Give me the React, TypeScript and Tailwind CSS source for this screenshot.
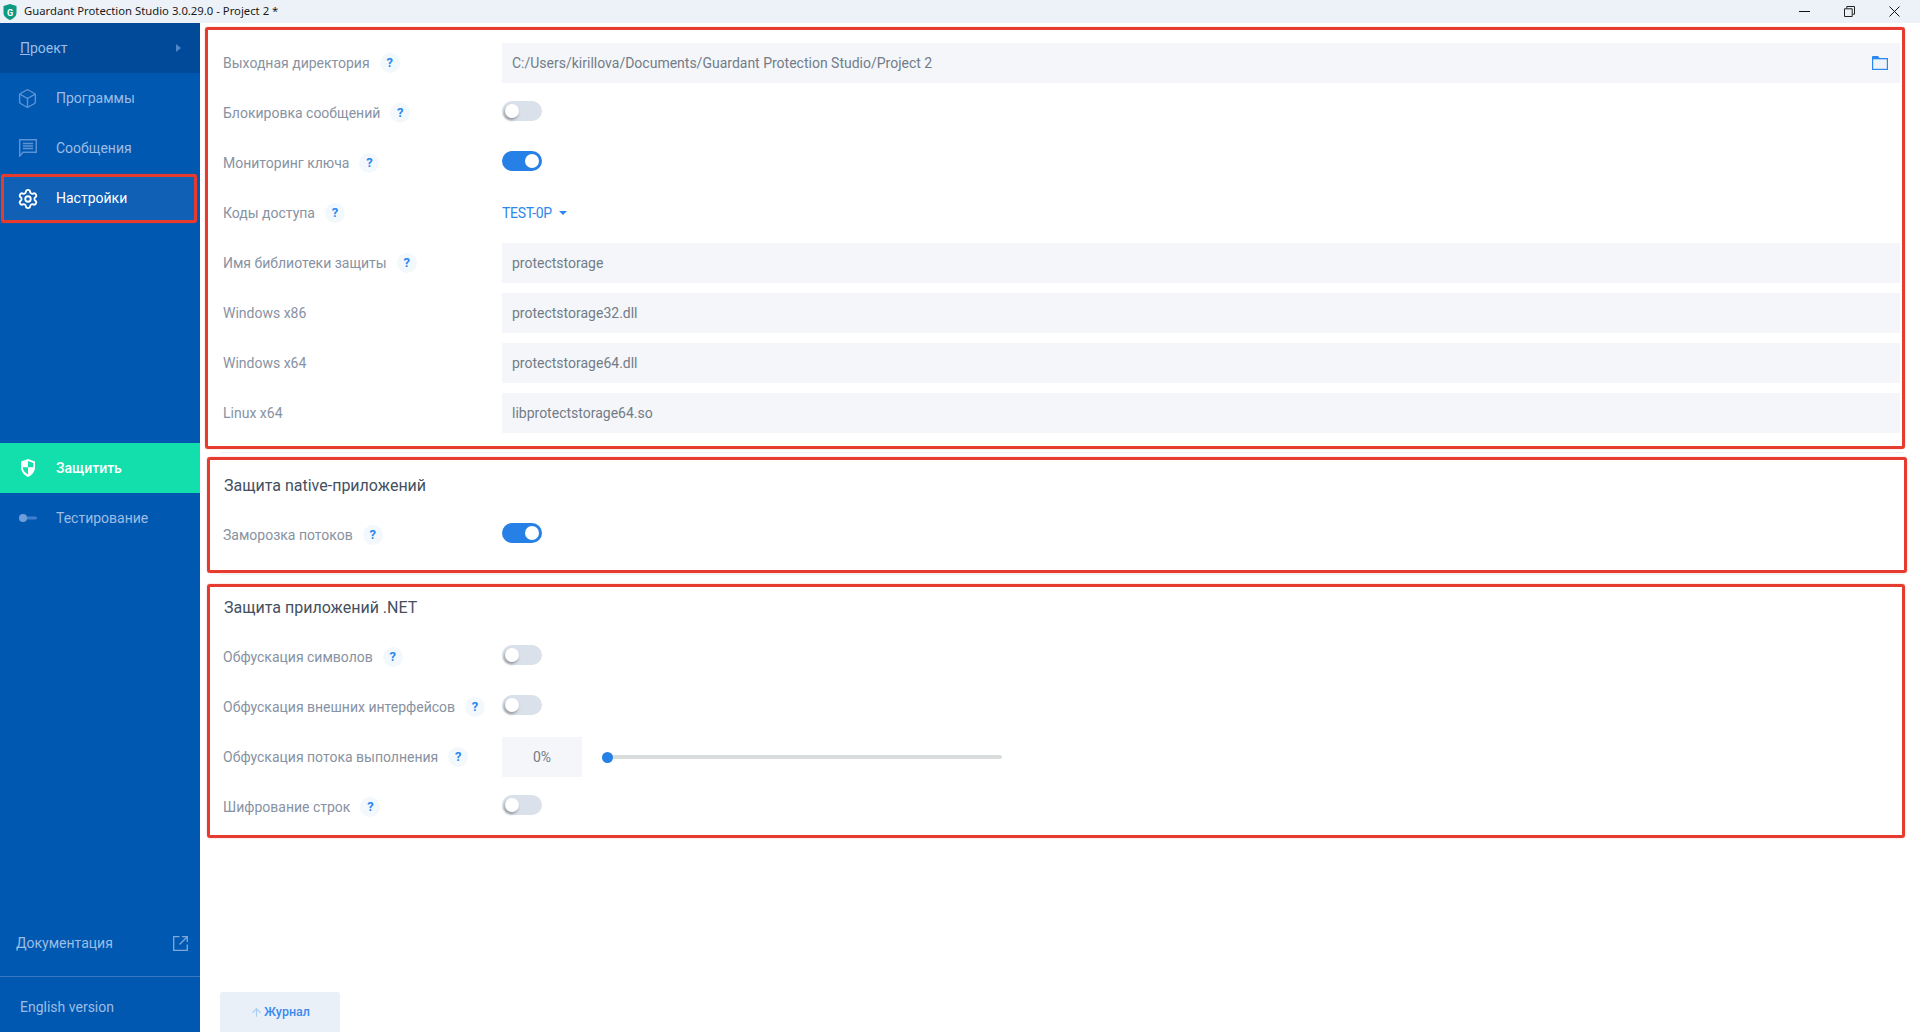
import { ReactNode } from "react";
import { ArrowUp, Box, Settings } from "lucide-react";

type RowProps = {
  label: string;
  children?: ReactNode;
};

const Help = () => (
  <span className="ml-[10px] flex h-5 w-5 shrink-0 items-center justify-center rounded-full bg-[#f3f8fd] text-[13px] font-bold text-[#2b88ee]">
    ?
  </span>
);

const Row = ({ label, children }: RowProps) => (
  <div className="flex h-[50px] items-center">
    <div className="flex w-[279px] shrink-0 items-center text-[14px] text-[#8792a2]">
      <span>{label}</span>
      {label.startsWith("Windows") || label.startsWith("Linux") ? null : <Help />}
    </div>
    {children}
  </div>
);

const Toggle = ({ on }: { on?: boolean }) => (
  <div
    className={`mb-1 flex h-5 w-10 items-center rounded-full px-[3px] ${
      on ? "justify-end bg-[#2680e6]" : "justify-start bg-[#dbe1ea]"
    }`}
  >
    <div
      className={`h-[14px] w-[14px] rounded-full bg-white ${
        on ? "" : "shadow-[-1px_2px_3px_rgba(60,60,60,0.45)]"
      }`}
    />
  </div>
);

const Field = ({ value, icon }: { value: string; icon?: ReactNode }) => (
  <div className="flex h-10 flex-1 items-center justify-between bg-[#f4f6f9] pl-[10px] pr-[12px] text-[14px] text-[#727c88]">
    <span>{value}</span>
    {icon}
  </div>
);

const FolderIcon = () => (
  <svg width="16" height="14" viewBox="0 0 16 14" fill="none">
    <path d="M0 1.2C0 .5.5 0 1.2 0H6l1.6 2H16v12H0V1.2Z" fill="#2b88ee" />
    <rect x="1.2" y="3.3" width="13.6" height="9.5" fill="#eef3f8" />
  </svg>
);

const MessageIcon = () => (
  <svg width="18" height="18" viewBox="0 0 18 18" fill="none" stroke="currentColor">
    <path d="M.7.7h16.6v12.6H4L.7 17V.7Z" strokeWidth="1.4" />
    <path d="M4 4.5h10M4 7h10M4 9.5h10" strokeWidth="1.3" />
  </svg>
);

const ShieldIcon = () => (
  <svg width="16" height="18" viewBox="0 0 16 18" fill="none">
    <path d="M8 0 15 2.6v5.6c0 4.4-3 7.8-7 9.8-4-2-7-5.400-7-9.800V2.600L8 0Z" fill="white" />
    <path d="M8 2 13.300 4v4.200H8V2ZM8 8.200H2.700c.2 3 2.400 5.600 5.300 7.300V8.200Z" fill="#12dfab" />
  </svg>
);

const SwitchIcon = () => (
  <svg width="18" height="8" viewBox="0 0 18 8">
    <rect x="3" y="2.500" width="15" height="3" rx="1.500" fill="#3f7fcb" />
    <circle cx="4" cy="4" r="4" fill="#6f9fdb" />
  </svg>
);

const LinkIcon = () => (
  <svg width="15" height="15" viewBox="0 0 15 15" fill="none" stroke="#7fa8da" strokeWidth="1.3">
    <path d="M6.500.7H.7v13.600h13.600V8.500" />
    <path d="M9 .7h5.300V6M14.300.7 6.500 8.500" />
  </svg>
);

const AppIcon = () => (
  <svg width="14" height="16" viewBox="0 0 14 16">
    <path d="M7 0 13.500 2v7c0 3-3 5.500-6.500 7C3.500 14.500.5 12 .5 9V2L7 0Z" fill="#0e9a82" />
    <text x="7" y="11.500" textAnchor="middle" fontSize="9" fontWeight="700" fill="white" fontFamily="Roboto, sans-serif">
      G
    </text>
  </svg>
);

const NavItem = ({ icon, label }: { icon: ReactNode; label: string }) => (
  <div className="flex h-[50px] items-center text-[14px] text-[#9dbde6]">
    <span className="flex w-[56px] shrink-0 pl-[19px] text-[#5c93d6]">{icon}</span>
    {label}
  </div>
);

export default function App() {
  return (
    <div className="flex h-[1032px] w-full flex-col overflow-hidden bg-white font-['Roboto',sans-serif]">
      <div className="flex h-[23px] shrink-0 items-center justify-between bg-[#edf2f8] pl-[3px] pr-[20px]">
        <div className="flex items-center gap-[7px] font-['Noto_Sans',sans-serif] text-[11.300px] text-[#1a1a1a]">
          <AppIcon />
          Guardant Protection Studio 3.0.29.0 - Project 2 *
        </div>
        <div className="flex items-center gap-[34px]">
          <svg width="11" height="11" viewBox="0 0 11 11" stroke="#111" fill="none">
            <path d="M0 5.500h11" />
          </svg>
          <svg width="11" height="11" viewBox="0 0 11 11" stroke="#222" fill="none">
            <path d="M.5 2.800h7.700v7.700H.500zM2.800 2.500V.5h7.700v7.700H8.500" />
          </svg>
          <svg width="11" height="11" viewBox="0 0 11 11" stroke="#111" fill="none">
            <path d="M.5.5l10 10M10.500.5l-10 10" />
          </svg>
        </div>
      </div>

      <div className="flex min-h-0 flex-1">
        <aside className="flex w-[200px] shrink-0 flex-col bg-[#0058b0]">
          <div className="flex h-[50px] items-center justify-between bg-[#004a99] pl-5 pr-[19px] text-[14px] text-[#9dbde6]">
            <span>
              <span className="underline">П</span>роект
            </span>
            <span className="h-0 w-0 border-y-[4px] border-l-[5px] border-y-transparent border-l-[#4f87cb]" />
          </div>
          <NavItem
            icon={
              <span className="-m-[2px]">
                <Box size={21} strokeWidth={1.6} />
              </span>
            }
            label="Программы"
          />
          <NavItem icon={<MessageIcon />} label="Сообщения" />
          <div className="ml-px mr-[3px] mt-px flex h-[49px] items-center rounded-[3px] border-[3px] border-[#e63c30] bg-[#1060b6] text-[14px] text-white shadow-[0_0_1px_#e63c30]">
            <span className="flex w-[52px] shrink-0 pl-[13px]">
              <Settings size={22} strokeWidth={2} />
            </span>
            Настройки
          </div>
          <div className="h-[220px] shrink-0" />
          <div className="flex h-[50px] items-center bg-[#12dfab] text-[14px] font-medium text-white">
            <span className="flex w-[56px] shrink-0 pl-5">
              <ShieldIcon />
            </span>
            Защитить
          </div>
          <NavItem icon={<SwitchIcon />} label="Тестирование" />
          <div className="mt-auto flex h-[67px] items-center justify-between border-b border-[#3a78c4] pl-4 pr-3 text-[14px] text-[#9dbde6]">
            Документация
            <LinkIcon />
          </div>
          <div className="flex h-[55px] items-center pl-5 pt-[5px] text-[14px] text-[#9dbde6]">English version</div>
        </aside>

        <main className="flex min-w-0 flex-1 flex-col">
          <section className="ml-[5px] mr-[15px] mt-1 h-[422px] rounded-[3px] border-[3px] border-[#e63c30] pl-[15px] pr-[2px] pt-2 shadow-[0_0_1px_#e63c30]">
            <Row label="Выходная директория">
              <Field value="C:/Users/kirillova/Documents/Guardant Protection Studio/Project 2" icon={<FolderIcon />} />
            </Row>
            <Row label="Блокировка сообщений">
              <Toggle />
            </Row>
            <Row label="Мониторинг ключа">
              <Toggle on />
            </Row>
            <Row label="Коды доступа">
              <div className="flex items-center gap-[7px] text-[14px] tracking-[-0.3px] text-[#2b88ee]">
                TEST-0P
                <span className="h-0 w-0 border-x-[4px] border-t-[4px] border-x-transparent border-t-[#2b88ee]" />
              </div>
            </Row>
            <Row label="Имя библиотеки защиты">
              <Field value="protectstorage" />
            </Row>
            <Row label="Windows x86">
              <Field value="protectstorage32.dll" />
            </Row>
            <Row label="Windows x64">
              <Field value="protectstorage64.dll" />
            </Row>
            <Row label="Linux x64">
              <Field value="libprotectstorage64.so" />
            </Row>
          </section>

          <div className="ml-5 mr-4 mt-[3px] h-px bg-[#eef0f3]" />

          <section className="ml-[7px] mr-[13px] mt-1 h-[116px] rounded-[3px] border-[3px] border-[#e63c30] pl-[13px] shadow-[0_0_1px_#e63c30]">
            <div className="flex h-[50px] items-center pl-px pt-px text-[16px] text-[#44505f]">Защита native-приложений</div>
            <Row label="Заморозка потоков">
              <Toggle on />
            </Row>
          </section>

          <div className="ml-5 mr-4 mt-px h-px bg-[#eef0f3]" />

          <section className="ml-[7px] mr-[15px] mt-[9px] h-[254px] rounded-[3px] border-[3px] border-[#e63c30] pl-[13px] shadow-[0_0_1px_#e63c30]">
            <div className="mb-[5px] flex h-10 items-center pl-px pt-px text-[16px] text-[#44505f]">Защита приложений .NET</div>
            <Row label="Обфускация символов">
              <Toggle />
            </Row>
            <Row label="Обфускация внешних интерфейсов">
              <Toggle />
            </Row>
            <Row label="Обфускация потока выполнения">
              <div className="flex h-10 w-20 items-center justify-center bg-[#f4f6f9] text-[14px] text-[#727c88]">0%</div>
              <div className="ml-5 flex w-[400px] items-center">
                <div className="relative h-1 w-full rounded-full bg-[#d8dcdc]">
                  <span className="absolute left-0 top-[-3.500px] h-[11px] w-[11px] rounded-full bg-[#2680e6]" />
                </div>
              </div>
            </Row>
            <Row label="Шифрование строк">
              <Toggle />
            </Row>
          </section>

          <div className="ml-5 mt-auto flex h-10 w-[120px] items-center justify-center gap-px rounded-t-[3px] bg-[#e9f0f8] text-[12.500px] font-medium text-[#3b8aef]">
            <ArrowUp size={13} className="text-[#a9cdf2]" />
            Журнал
          </div>
        </main>
      </div>
    </div>
  );
}
